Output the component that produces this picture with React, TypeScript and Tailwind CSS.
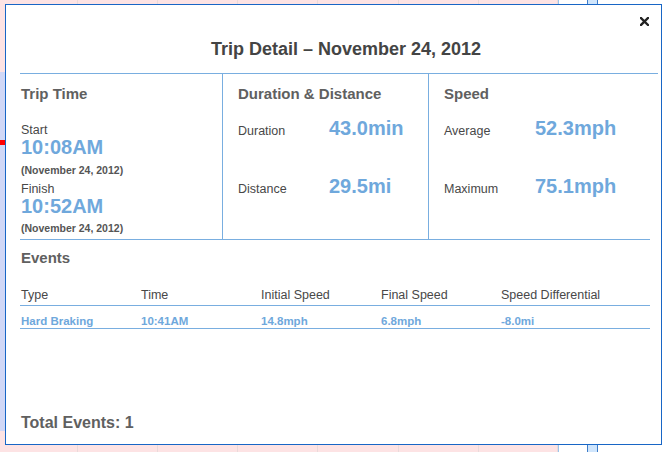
import React from 'react'

const gridCols = [78, 80, 80, 80, 81, 80, 79]

const events = [
  { type: 'Hard Braking', time: '10:41AM', initial: '14.8mph', final: '6.8mph', diff: '-8.0mi' },
]

function Stat({ label, value, className }: { label: string; value: string; className?: string }) {
  return (
    <div className={`flex items-baseline ${className ?? ''}`}>
      <span className="w-[91px] text-[12.5px] leading-[12px] text-[#484848]">{label}</span>
      <span className="text-[20px] leading-[22px] font-bold text-[#6fa8dc]">{value}</span>
    </div>
  )
}

export default function App() {
  return (
    <div className="relative w-[672px] h-[452px] overflow-hidden bg-white font-['Liberation_Sans',Arial,sans-serif]">
      {/* calendar behind the dialog */}
      <div className="flex h-full">
        <div className="flex w-[558px] bg-[#fde3e4]">
          {gridCols.map((w, i) => (
            <div
              key={i}
              className="h-full border-r border-[#e9dada]"
              style={{ width: w }}
            >
              {i === 0 && (
                <div className="mt-[72px] h-[359px] bg-[#d1d8f7]">
                  <div className="pt-[68px]">
                    <div className="h-[5px] w-[6px] bg-[#f00]" />
                  </div>
                </div>
              )}
            </div>
          ))}
        </div>
        <div className="w-px bg-[#9cc3ec]" />
        <div className="w-[28px]" />
        <div className="w-[11px] bg-[#cfe5fc] border-x border-[#3d7cc9]" />
      </div>

      {/* dialog */}
      <div className="absolute left-[5px] top-[4px] w-[657px] h-[441px] border border-[#1866c6] bg-white flex flex-col pl-[14px]">
        <button className="absolute left-[634px] top-[12px] w-[9px] h-[9px] text-[#222]">
          <svg width="9" height="9" viewBox="0 0 9 9" className="block">
            <path d="M1 1L8 8M8 1L1 8" stroke="currentColor" strokeWidth="2.4" strokeLinecap="square" />
          </svg>
        </button>

        <h1 className="mt-[33px] pl-[14px] w-[638px] text-center text-[18px] leading-[22px] font-bold text-[#444]">
          Trip Detail – November 24, 2012
        </h1>
        <div className="mt-[13px] h-px w-[638px] bg-[#79aee0]" />

        <div className="flex w-[630px] h-[166px] border-b border-[#79aee0]">
          <div className="w-[203px] border-r border-[#79aee0] pl-px pt-[11px]">
            <h2 className="text-[15px] leading-[18px] font-bold text-[#606060]">Trip Time</h2>
            <div className="mt-[21px] text-[12.5px] leading-[12px] text-[#484848]">Start</div>
            <div className="text-[20px] leading-[22px] font-bold text-[#6fa8dc]">10:08AM</div>
            <div className="mt-[6px] text-[10.5px] leading-[13px] font-bold text-[#555]">(November 24, 2012)</div>
            <div className="mt-[6px] text-[12.5px] leading-[12px] text-[#484848]">Finish</div>
            <div className="text-[20px] leading-[22px] font-bold text-[#6fa8dc]">10:52AM</div>
            <div className="mt-[5px] text-[10.5px] leading-[13px] font-bold text-[#555]">(November 24, 2012)</div>
          </div>
          <div className="w-[206px] border-r border-[#79aee0] pl-[15px] pt-[11px]">
            <h2 className="text-[15px] leading-[18px] font-bold text-[#606060]">Duration &amp; Distance</h2>
            <Stat className="mt-[14px]" label="Duration" value="43.0min" />
            <Stat className="mt-[36px]" label="Distance" value="29.5mi" />
          </div>
          <div className="flex-1 pl-[15px] pt-[11px]">
            <h2 className="text-[15px] leading-[18px] font-bold text-[#606060]">Speed</h2>
            <Stat className="mt-[14px]" label="Average" value="52.3mph" />
            <Stat className="mt-[36px]" label="Maximum" value="75.1mph" />
          </div>
        </div>

        <h2 className="mt-[9px] pl-px text-[15px] leading-[18px] font-bold text-[#606060]">Events</h2>

        <div className="mt-[21px] w-[630px]">
          <div className="grid grid-cols-[120px_120px_120px_120px_1fr] pl-px pb-[3px] border-b border-[#79aee0] text-[12.5px] leading-[14px] text-[#484848]">
            <span>Type</span>
            <span>Time</span>
            <span>Initial Speed</span>
            <span>Final Speed</span>
            <span>Speed Differential</span>
          </div>
          {events.map((e) => (
            <div
              key={e.type + e.time}
              className="grid grid-cols-[120px_120px_120px_120px_1fr] pl-px pt-[8px] border-b border-[#79aee0] text-[11.5px] leading-[14px] font-bold text-[#6fa8dc]"
            >
              <span>{e.type}</span>
              <span>{e.time}</span>
              <span>{e.initial}</span>
              <span>{e.final}</span>
              <span>{e.diff}</span>
            </div>
          ))}
        </div>

        <div className="mt-auto mb-[12px] pl-px text-[16px] leading-[19px] font-bold text-[#606060]">
          Total Events: 1
        </div>
      </div>
    </div>
  )
}
